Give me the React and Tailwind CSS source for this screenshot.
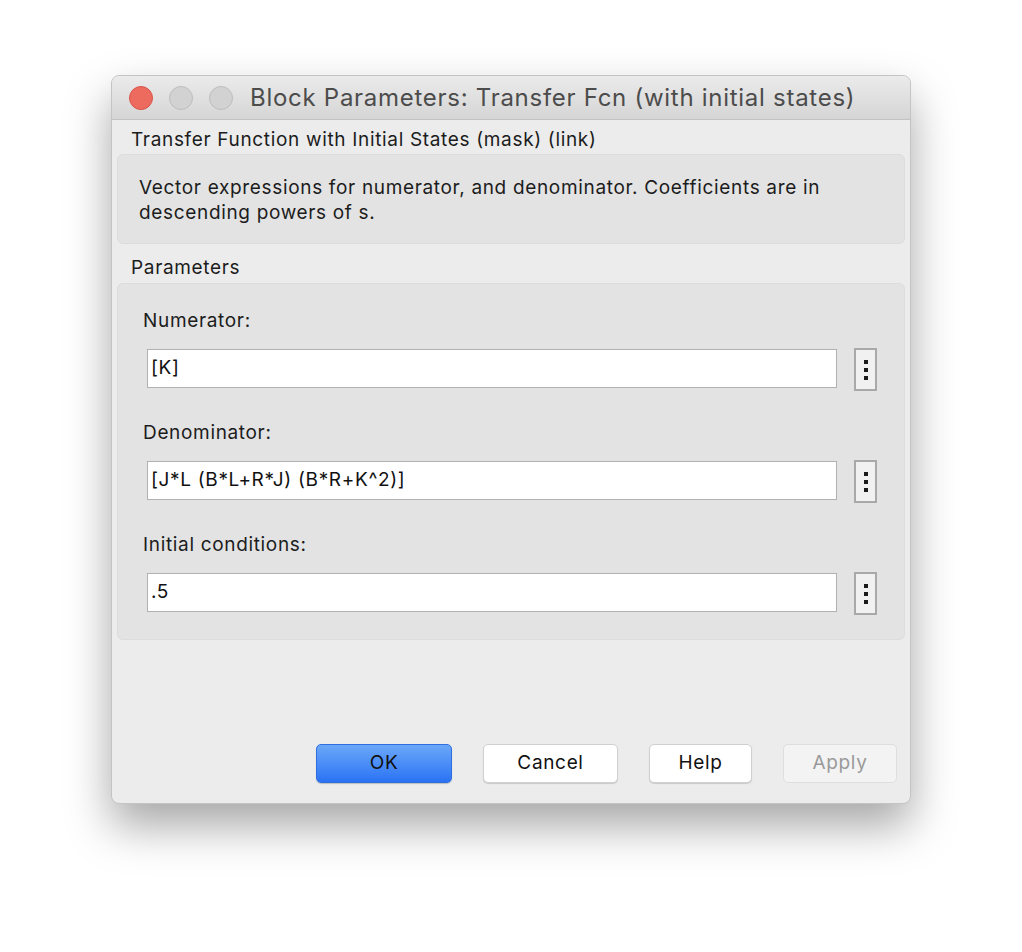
import React from 'react';

const font = { fontFamily: 'Inter, "Noto Sans", sans-serif' };

const DotsButton = () => (
    <div className="w-[23px] h-[43px] border-2 border-[#a9a9a9] bg-[#f1f1f1] flex flex-col items-center justify-center gap-[4px] shrink-0">
        <span className="block w-[4px] h-[4px] bg-[#1a1a1a]"></span>
        <span className="block w-[4px] h-[4px] bg-[#1a1a1a]"></span>
        <span className="block w-[4px] h-[4px] bg-[#1a1a1a]"></span>
    </div>
);

const Field = ({ label, value, first }) => (
    <div className={first ? '' : 'mt-[31px]'}>
        <div className="pl-[25px] pt-[1px] h-[26px] leading-[26px] text-[19px] tracking-[0.035em] text-[#1c1c1c]">{label}</div>
        <div className="mt-[16px] h-[39px] flex items-center pl-[29px] pr-[27px]">
            <div className="flex-1 h-[39px] bg-white border border-[#b1b1b1] flex items-center pl-[3px] text-[19px] tracking-[0.035em] text-[#111]">
                {value}
            </div>
            <div className="ml-[17px] mt-[2px]">
                <DotsButton />
            </div>
        </div>
    </div>
);

const Button = ({ children, kind }) => {
    if (kind === 'primary') {
        return (
            <div className="w-[136px] h-[39px] rounded-[5px] bg-gradient-to-b from-[#6ba7f8] to-[#2a72f4] border border-[#2f6fe0] flex items-center justify-center text-[19px] tracking-[0.035em] text-[#111] shadow-[0_1px_1px_rgba(0,0,0,0.2)]">
                {children}
            </div>
        );
    }
    if (kind === 'disabled') {
        return (
            <div className="w-[114px] h-[39px] rounded-[5px] bg-[#f3f3f3] border border-[#dedede] flex items-center justify-center text-[19px] tracking-[0.035em] text-[#9a9a9a]">
                {children}
            </div>
        );
    }
    return (
        <div className={`${kind === 'wide' ? 'w-[135px]' : 'w-[103px]'} h-[39px] rounded-[5px] bg-white border border-[#d0d0d0] flex items-center justify-center text-[19px] tracking-[0.035em] text-[#111] shadow-[0_1px_1px_rgba(0,0,0,0.15)]`}>
            {children}
        </div>
    );
};

export default function App() {
    return (
        <div className="min-h-[952px] bg-white pt-[75px] pl-[111px]" style={font}>
            <div className="w-[800px] h-[729px] rounded-[8px] bg-[#ececec] border border-[#c4c4c4] shadow-[0_22px_45px_rgba(0,0,0,0.35)] flex flex-col overflow-hidden">
                {/* Title bar */}
                <div className="h-[44px] shrink-0 flex items-center bg-gradient-to-b from-[#ebebeb] to-[#d5d5d5] border-b border-[#c2c2c2]">
                    <div className="flex items-center gap-[16px] pl-[17px]">
                        <span className="block w-[24px] h-[24px] rounded-full bg-[#ed6a5e] border border-[#d8554a]"></span>
                        <span className="block w-[24px] h-[24px] rounded-full bg-[#d2d2d2] border border-[#bdbdbd]"></span>
                        <span className="block w-[24px] h-[24px] rounded-full bg-[#d2d2d2] border border-[#bdbdbd]"></span>
                    </div>
                    <div className="ml-[17px] text-[24px] tracking-[0.03em] text-[#4c4c4c] whitespace-nowrap">
                        Block Parameters: Transfer Fcn (with initial states)
                    </div>
                </div>

                {/* Content */}
                <div className="px-[5px] flex flex-col">
                    <div className="h-[34px] pt-[6px] flex items-center pl-[14px] text-[19px] tracking-[0.035em] text-[#1c1c1c]">
                        Transfer Function with Initial States (mask) (link)
                    </div>
                    <div className="h-[90px] rounded-[6px] bg-[#e3e3e3] border border-[#dcdcdc] pt-[20px] pl-[21px] text-[19px] leading-[25px] tracking-[0.035em] text-[#1c1c1c]">
                        Vector expressions for numerator, and denominator. Coefficients are in
                        <br />
                        descending powers of s.
                    </div>
                    <div className="h-[39px] pt-[10px] flex items-center pl-[14px] text-[19px] tracking-[0.035em] text-[#1c1c1c]">
                        Parameters
                    </div>
                    <div className="h-[357px] rounded-[6px] bg-[#e3e3e3] border border-[#dcdcdc] pt-[23px]">
                        <Field first label="Numerator:" value="[K]" />
                        <Field label="Denominator:" value="[J*L (B*L+R*J) (B*R+K^2)]" />
                        <Field label="Initial conditions:" value=".5" />
                    </div>
                </div>

                {/* Buttons */}
                <div className="mt-auto pb-[20px] pr-[13px] flex justify-end gap-[31px]">
                    <Button kind="primary">OK</Button>
                    <Button kind="wide">Cancel</Button>
                    <Button>Help</Button>
                    <Button kind="disabled">Apply</Button>
                </div>
            </div>
        </div>
    );
}
